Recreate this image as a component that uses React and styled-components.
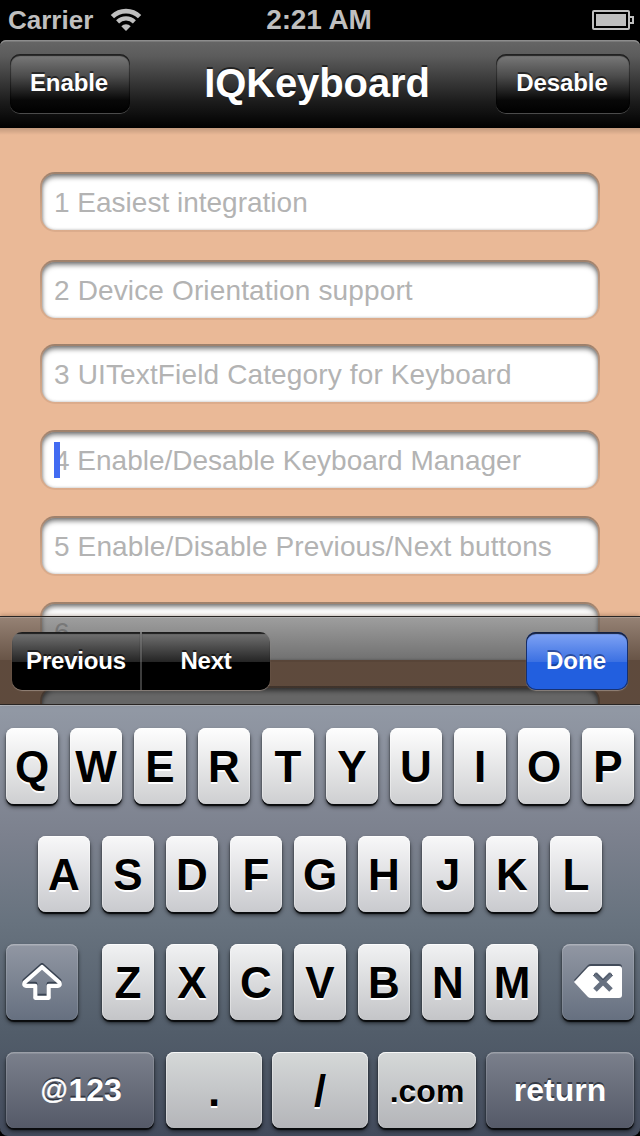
import React from 'react';
import styled, { createGlobalStyle } from 'styled-components';

const GlobalStyle = createGlobalStyle`
  * { box-sizing: border-box; }
  body {
    margin: 0;
    background: #000;
    font-family: "Liberation Sans", Arial, sans-serif;
    overflow: hidden;
  }
`;

const Screen = styled.main`
  width: 640px;
  height: 1136px;
  display: flex;
  flex-direction: column;
  overflow: hidden;
  background: #000;
`;

const StatusBar = styled.header`
  height: 40px;
  flex: none;
  display: grid;
  grid-template-columns: 1fr auto 1fr;
  align-items: center;
  padding: 0 6px 0 8px;
  color: #bfbfbf;
  font-weight: bold;
`;

const Carrier = styled.div`
  display: flex;
  align-items: center;
  gap: 17px;
  font-size: 26px;
  line-height: 40px;
  svg { display: block; }
`;

const Clock = styled.div`
  font-size: 28px;
  line-height: 40px;
  letter-spacing: -0.1px;
  padding-right: 4px;
`;

const Battery = styled.svg`
  justify-self: end;
  display: block;
`;

const NavBar = styled.nav`
  height: 88px;
  flex: none;
  display: flex;
  justify-content: space-between;
  align-items: flex-start;
  padding: 14px 10px 0;
  border-radius: 6px 6px 0 0;
  background: linear-gradient(#666 0, #5c5c5c 18%, #1c1c1c 70%, #000 100%);
  box-shadow: inset 0 2px 0 -0.5px #8d8d8d;
`;

const Title = styled.h1`
  margin: 0;
  padding-left: 8px;
  font-size: 40px;
  line-height: 58px;
  letter-spacing: -0.1px;
  color: #fff;
  text-shadow: 0 -2px 0 rgba(0, 0, 0, 0.55);
`;

const NavButton = styled.button`
  width: ${(p) => p.$width}px;
  height: 59px;
  padding: 0 2px 1px 0;
  border: 0;
  border-radius: 10px;
  background: linear-gradient(#7c7c7c, #4b4b4b 38%, #080808 78%, #000);
  box-shadow: inset 0 2px 1px rgba(0, 0, 0, 0.7), inset 1px 0 1px rgba(0, 0, 0, 0.4),
    inset -1px 0 1px rgba(0, 0, 0, 0.4), 0 1px 0 #4b4b4b;
  color: #fff;
  font: bold 24px/56px "Liberation Sans", Arial, sans-serif;
  letter-spacing: -0.1px;
  text-shadow: 0 -2px 0 rgba(0, 0, 0, 0.5);
`;

const Content = styled.section`
  height: 576px;
  flex: none;
  overflow: hidden;
  padding: 44px 40px 0;
  background: linear-gradient(rgba(0, 0, 0, 0.17), transparent 7px), #eab997;
`;

const Field = styled.div`
  height: 60px;
  margin-bottom: ${(p) => p.$after}px;
  display: flex;
  align-items: center;
  padding: 2px 12px 0;
  border: 2px solid transparent;
  border-radius: 15px;
  background: linear-gradient(#fff, #fff) padding-box,
    linear-gradient(#9d806b, #b8937a 14px, #cda486 60%, #dcac8c) border-box;
  box-shadow: inset 0 3px 5px rgba(0, 0, 0, 0.5), inset 0 0 3px rgba(0, 0, 0, 0.2);
  color: #b3b3b3;
  font-size: 28px;
  line-height: 56px;
  letter-spacing: ${(p) => p.$tracking}px;
  white-space: nowrap;
`;

const Caret = styled.span`
  width: 6px;
  height: 36px;
  margin: -2px -6px 0 0;
  background: #426bf2;
  z-index: 1;
`;

const Toolbar = styled.div`
  height: 89px;
  flex: none;
  margin-top: -88px;
  position: relative;
  display: flex;
  justify-content: space-between;
  align-items: flex-start;
  padding: 15px 12px 0;
  border-top: 1px solid #292523;
  border-bottom: 1px solid #292523;
  background: linear-gradient(rgba(94, 94, 94, 0.6), rgba(18, 18, 18, 0.6) 43px, rgba(0, 0, 0, 0.6) 43px);
  background-clip: padding-box;
  box-shadow: inset 0 1px 0 rgba(255, 255, 255, 0.18), 0 -1px 4px rgba(60, 30, 10, 0.3);
`;

const Segments = styled.div`
  display: flex;
  width: 258px;
  height: 58px;
  border-radius: 10px;
  overflow: hidden;
  background: linear-gradient(#757575, #242424 30px, #000 30px);
  box-shadow: 0 1px 1px rgba(170, 155, 145, 0.7);
`;

const Segment = styled.button`
  width: ${(p) => p.$width}px;
  padding: 0;
  border: 0;
  border-right: ${(p) => (p.$divided ? '2px solid rgba(120, 120, 120, 0.5)' : '0')};
  background: transparent;
  box-shadow: inset 0 2px 1px rgba(0, 0, 0, 0.75);
  color: #fff;
  font: bold 24px/58px "Liberation Sans", Arial, sans-serif;
  letter-spacing: -0.2px;
  text-shadow: 0 -2px 0 rgba(0, 0, 0, 0.5);
`;

const DoneButton = styled.button`
  width: 102px;
  height: 58px;
  padding: 0 2px 0 0;
  border: 0;
  border-radius: 10px;
  background: linear-gradient(#82a5f5, #3b70e2 30px, #225fdf 30px);
  box-shadow: inset 0 2px 1px #16213f, inset 0 0 0 1px #173275, 0 1px 1px rgba(170, 155, 145, 0.7);
  color: #fff;
  font: bold 24px/58px "Liberation Sans", Arial, sans-serif;
  text-shadow: 0 -2px 0 rgba(20, 45, 110, 0.6);
`;

const Keyboard = styled.section`
  height: 431px;
  flex: none;
  display: flex;
  flex-direction: column;
  gap: 32px;
  padding: 23px 6px 0;
  border-radius: 0 0 8px 8px;
  background: linear-gradient(#9299a5, #7c818e 30%, #68737f 50%, #525d6a 76%, #434b5c);
  box-shadow: inset 0 1px 0 #b4bac2;
`;

const KeyRow = styled.div`
  height: 76px;
  display: flex;
  justify-content: ${(p) => p.$justify || 'center'};
`;

const KeyGroup = styled.div`
  display: flex;
  gap: ${(p) => p.$gap || 12}px;
`;

const tones = {
  1: ['#fefefe', '#cecfd1'],
  2: ['#f8f8f9', '#c9cace'],
  3: ['#f1f2f3', '#c4c5c8'],
  4: ['#d5d8d8', '#b4b5b9'],
};

const Key = styled.button`
  width: ${(p) => p.$width || 52}px;
  height: 76px;
  padding: 0;
  border: 0;
  border-radius: 8px;
  color: #000;
  background: linear-gradient(${(p) => tones[p.$tone][0]}, ${(p) => tones[p.$tone][1]});
  box-shadow: inset 0 1px 0 rgba(255, 255, 255, 0.8), inset 1px 0 0 rgba(255, 255, 255, 0.35),
    inset -1px 0 0 rgba(255, 255, 255, 0.35), 0 2px 1px #090b0d, 0 3px 4px rgba(0, 0, 0, 0.6);
  font: bold ${(p) => p.$size || 44}px/78px "Liberation Sans", Arial, sans-serif;
  text-shadow: 0 2px 0 #fff;
`;

const DarkKey = styled(Key)`
  display: flex;
  align-items: center;
  justify-content: center;
  color: #fff;
  background: ${(p) =>
    p.$tone === 3 ? 'linear-gradient(#9197a3, #667080)' : 'linear-gradient(#7b808c, #555a68)'};
  box-shadow: inset 0 2px 0 -0.5px rgba(255, 255, 255, 0.25), inset 1px 0 0 rgba(255, 255, 255, 0.12),
    inset -1px 0 0 rgba(255, 255, 255, 0.12), 0 2px 1px #090b0d, 0 3px 4px rgba(0, 0, 0, 0.6);
  text-shadow: 0 -2px 0 rgba(20, 25, 35, 0.65);
`;

const AtSign = styled.span`
  font-weight: normal;
  font-size: 28px;
  padding-left: 2px;
  -webkit-text-stroke: 0.4px #fff;
`;

const WifiIcon = () => (
  <svg width="32" height="24" viewBox="0 0 32 24" fill="none" stroke="#bfbfbf">
    <path d="M2.400 8.600A19.500 19.500 0 0 1 29.600 8.600" strokeWidth="4.700" />
    <path d="M7.600 13.900A12 12 0 0 1 24.400 13.900" strokeWidth="4.300" />
    <path d="M11.300 18.300A6.400 6.400 0 0 1 20.700 18.300L16 23Z" fill="#bfbfbf" stroke="none" />
  </svg>
);

const ShiftIcon = () => (
  <svg width="42" height="38" viewBox="0 0 42 38" fill="none" strokeLinejoin="round">
    <path d="M21 4 3.500 19.500Q2.500 22.800 5 22.800H14.300V34.800H27.700V22.800H37Q39.500 22.800 38.500 19.500Z" stroke="#394352" strokeWidth="4.200" transform="translate(0 -2)" />
    <path d="M21 4 3.500 19.500Q2.500 22.800 5 22.800H14.300V34.800H27.700V22.800H37Q39.500 22.800 38.500 19.500Z" stroke="#fff" strokeWidth="4.200" />
  </svg>
);

const DeleteIcon = () => (
  <svg width="50" height="36" viewBox="0 0 50 36">
    <path d="M1 16 15 1Q16 0 18 0H46Q49 0 49 3V29Q49 32 46 32H18Q16 32 15 31Z" fill="#424b5a" />
    <path d="M1 18 15 3Q16 2 18 2H46Q49 2 49 5V31Q49 34 46 34H18Q16 34 15 33Z" fill="#fff" />
    <path d="m22 10 16 16m0-16L22 26" stroke="#667080" strokeWidth="5" />
    <path d="m20.500 12 2-3 7.500 7 7.500-7 2 3" stroke="#465060" strokeWidth="1" fill="none" />
  </svg>
);

const fields = [
  ['1 Easiest integration', 28, 0],
  ['2 Device Orientation support', 24, 0.14],
  ['3 UITextField Category for Keyboard', 26, 0.14],
  ['4 Enable/Desable Keyboard Manager', 26, 0],
  ['5 Enable/Disable Previous/Next buttons', 26, 0.12],
  ['6', 24, 0],
  ['', 0, 0],
];

const Letters = ({ letters, tone }) => (
  <KeyGroup>
    {[...letters].map((c) => (
      <Key key={c} $tone={tone}>{c}</Key>
    ))}
  </KeyGroup>
);

export default function App() {
  return (
    <Screen>
      <GlobalStyle />
      <StatusBar>
        <Carrier>
          Carrier
          <WifiIcon />
        </Carrier>
        <Clock>2:21 AM</Clock>
        <Battery width="42" height="20" viewBox="0 0 42 20">
          <rect x="1" y="1" width="36" height="18" rx="1" fill="none" stroke="#bfbfbf" strokeWidth="2" />
          <rect x="4" y="4" width="30" height="12" fill="#bfbfbf" />
          <path d="M38 7H41V13H38" fill="none" stroke="#bfbfbf" strokeWidth="2" />
        </Battery>
      </StatusBar>
      <NavBar>
        <NavButton $width={120}>Enable</NavButton>
        <Title>IQKeyboard</Title>
        <NavButton $width={134}>Desable</NavButton>
      </NavBar>
      <Content>
        {fields.map(([text, after, tracking], i) => (
          <Field key={i} $after={after} $tracking={tracking}>
            {i === 3 && <Caret />}
            {text}
          </Field>
        ))}
      </Content>
      <Toolbar>
        <Segments>
          <Segment $width={130} $divided>Previous</Segment>
          <Segment $width={128}>Next</Segment>
        </Segments>
        <DoneButton>Done</DoneButton>
      </Toolbar>
      <Keyboard>
        <KeyRow><Letters letters="QWERTYUIOP" tone={1} /></KeyRow>
        <KeyRow><Letters letters="ASDFGHJKL" tone={2} /></KeyRow>
        <KeyRow $justify="space-between">
          <DarkKey $tone={3} $width={72}><ShiftIcon /></DarkKey>
          <Letters letters="ZXCVBNM" tone={3} />
          <DarkKey $tone={3} $width={72}><DeleteIcon /></DarkKey>
        </KeyRow>
        <KeyRow $justify="space-between">
          <DarkKey $tone={4} $width={148} $size={32}><AtSign>@</AtSign>123</DarkKey>
          <KeyGroup $gap={10}>
            <Key $tone={4} $width={96}>.</Key>
            <Key $tone={4} $width={96}>/</Key>
            <Key $tone={4} $width={98} $size={32}>.com</Key>
            <DarkKey $tone={4} $width={148} $size={32}>return</DarkKey>
          </KeyGroup>
        </KeyRow>
      </Keyboard>
    </Screen>
  );
}
